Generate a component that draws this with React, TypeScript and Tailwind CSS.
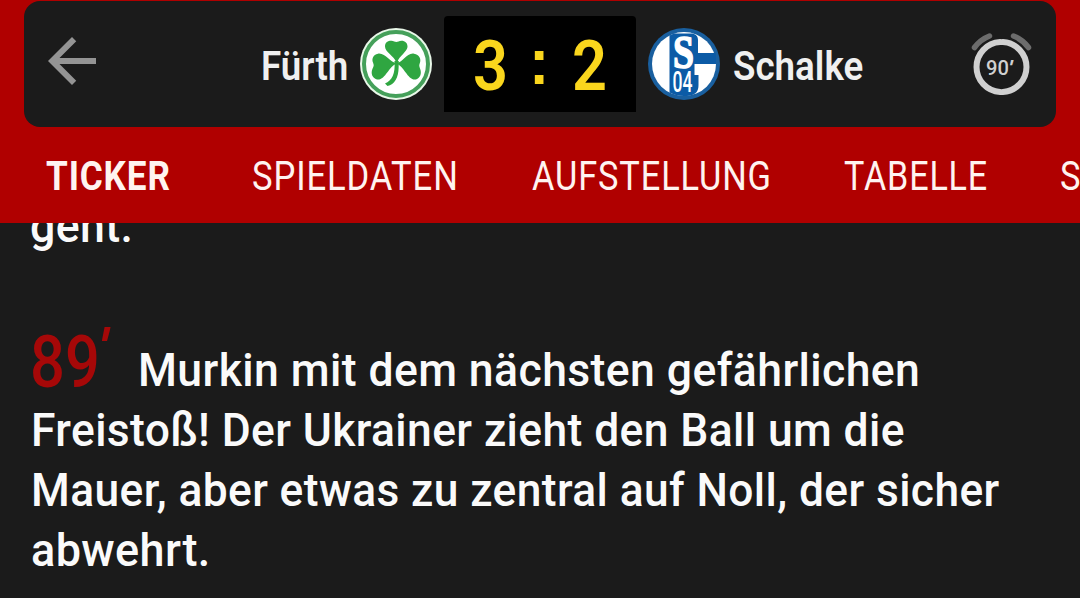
import { useLayoutEffect, useRef, useState } from "react";
import clsx from "clsx";

interface FitTextProps {
  children: string;
  className?: string;
  textClassName?: string;
}

// squeezes one line of text into the width of its box
function FitText({ children, className, textClassName }: FitTextProps) {
  const box = useRef<HTMLDivElement>(null);
  const text = useRef<HTMLSpanElement>(null);
  const [scale, setScale] = useState(1);

  useLayoutEffect(() => {
    if (!box.current || !text.current) return;
    setScale(box.current.clientWidth / text.current.offsetWidth);
  }, [children]);

  return (
    <div ref={box} className={clsx("shrink-0 whitespace-nowrap", className)}>
      <span
        ref={text}
        className={clsx("inline-block origin-left", textClassName)}
        style={{ transform: `scaleX(${scale})` }}
      >
        {children}
      </span>
    </div>
  );
}

function BackArrow() {
  return (
    <svg className="size-[72px]" viewBox="0 0 24 24" fill="#949494">
      <path d="M20 11H7.83l5.59-5.59L12 4l-8 8 8 8 1.41-1.41L7.83 13H20v-2z" />
    </svg>
  );
}

function FuerthLogo() {
  return (
    <svg className="size-[72px] shrink-0" viewBox="0 0 72 72">
      <circle cx="36" cy="36" r="36" fill="#e9f8e9" />
      <circle cx="36" cy="36" r="32" fill="#fff" stroke="#45a05a" strokeWidth="4" />
      <g fill="#2fa641">
        <path d="M36 34C34 28 25 24 25 18.500C25 14 28.500 12.500 31.500 12.700C33.500 12.800 35 14 36.300 14C37.800 14 39 12.700 41.500 12.700C45 12.700 47.800 15 47.500 19C47 24 39 28 37.500 34Z" />
        <path d="M36 35C31 35 25 24.500 18 25.700C13 26.600 11.500 31 13 34.500C14 37 14 38 12.600 40.500C10.500 45 12 50 17 51.500C25 53 29 38 36 36Z" />
        <path d="M37 35C42 35 47 24.500 54 25.700C59.500 26.600 61.200 31 60 34.500C59 37 59 38 60 40.500C62 45 60.500 50 56 51.500C48 53 44 38 37 36Z" />
        <path d="M34.500 33L38.800 33L38.600 40C38.500 49 34.500 57 27.500 58L25 55.500C32 52.500 35.500 46 34.500 33Z" />
      </g>
    </svg>
  );
}

function SchalkeLogo() {
  return (
    <svg className="size-[72px] shrink-0" viewBox="0 0 72 72">
      <circle cx="36" cy="36" r="36" fill="#195f9f" />
      <circle cx="36" cy="36" r="32" fill="#fff" />
      <path
        d="M21.500 7.500L26 5.500H44C47.500 6 50 8 50 12V25H68V36H46.500V47H50.500V57C50.500 63 48 66.500 42 67.500A32 32 0 0 1 21.500 64.500Z"
        fill="#0c5ba6"
      />
      <text
        x="25"
        y="40"
        fill="#fff"
        stroke="#fff"
        strokeWidth="1.500"
        fontSize="46"
        fontWeight="700"
        textLength="21"
        lengthAdjust="spacingAndGlyphs"
        fontFamily="Liberation Serif, serif"
      >
        S
      </text>
      <text
        x="24.500"
        y="64"
        fill="#fff"
        fontSize="29"
        fontWeight="500"
        textLength="20"
        lengthAdjust="spacingAndGlyphs"
        fontFamily="Roboto, sans-serif"
      >
        04
      </text>
    </svg>
  );
}

function MatchClock() {
  return (
    <div className="relative size-[72px]">
      <svg className="size-[72px]" viewBox="0 0 72 72" fill="none">
        <path
          d="M8.500 17.500A34 34 0 0 1 23.500 6M62.500 17.500A34 34 0 0 0 47.500 6"
          stroke="#6c6c6c"
          strokeWidth="5.500"
          strokeLinecap="round"
        />
        <path
          d="M34.100 12.040A25 25 0 0 0 34.100 61.960M36.900 12.040A25 25 0 0 1 36.900 61.960"
          stroke="#d0d0d0"
          strokeWidth="6"
          strokeLinecap="round"
        />
      </svg>
      <div className="absolute left-[20px] top-[26px] flex text-[21px]/[24px] font-medium text-[#d0d0d0]">
        <FitText className="w-[23px]">90</FitText>
        <FitText className="-ml-[1px] w-[4px]" textClassName="italic">
          ′
        </FitText>
      </div>
    </div>
  );
}

function ScoreBar() {
  return (
    <div className="mx-6 mt-px flex h-[126px] rounded-2xl bg-[#1b1b1b]">
      <div className="ml-3 mt-6 w-[225px] shrink-0">
        <BackArrow />
      </div>
      <FitText className="mt-10 w-[87px] text-[41px]/[50px] font-semibold text-[#f0f0f0]">
        Fürth
      </FitText>
      <div className="ml-3 mt-[27px]">
        <FuerthLogo />
      </div>
      <div className="ml-3 mt-[15px] flex h-24 w-48 shrink-0 rounded-t bg-black pl-[29px] text-[70px]/[100px] font-semibold text-[#fad61d]">
        <FitText className="w-[35px]">3</FitText>
        <FitText className="-mt-[4px] ml-[21px] w-[20px] font-['Liberation_Sans',sans-serif] text-[64px]/[100px] font-bold">
          :
        </FitText>
        <FitText className="ml-[23px] w-[35px]">2</FitText>
      </div>
      <div className="ml-3 mt-[27px]">
        <SchalkeLogo />
      </div>
      <FitText className="ml-[13px] mt-10 w-[130px] text-[41px]/[50px] font-semibold text-[#f0f0f0]">
        Schalke
      </FitText>
      <div className="ml-auto mr-[18px] mt-[29px]">
        <MatchClock />
      </div>
    </div>
  );
}

function Tabs() {
  return (
    <nav className="flex h-24 overflow-hidden pl-[46px] pt-[25px] text-[41px]/[48px] text-[#fff3f0]">
      <FitText className="w-[125px]" textClassName="font-bold tracking-wide">
        TICKER
      </FitText>
      <FitText className="ml-[81px] w-[207px]" textClassName="tracking-wide">
        SPIELDATEN
      </FitText>
      <FitText className="ml-[73px] w-[240px]" textClassName="tracking-wide">
        AUFSTELLUNG
      </FitText>
      <FitText className="ml-[72px] w-[144px]" textClassName="tracking-wide">
        TABELLE
      </FitText>
      <FitText className="ml-[72px] w-[170px]" textClassName="tracking-wide">
        STATISTIK
      </FitText>
    </nav>
  );
}

export default function App() {
  return (
    <div className="flex h-[598px] w-[1080px] flex-col overflow-hidden bg-[#1b1b1b] font-['Roboto',sans-serif]">
      <header className="h-[223px] shrink-0 bg-[#b00000]">
        <ScoreBar />
        <Tabs />
      </header>
      <main className="min-h-0 flex-1 overflow-hidden pl-[30px] text-[46px]/[60px] font-medium text-[#fafafa]">
        <FitText className="-mt-[27px] w-[103px]" textClassName="tracking-[0.4px]">
          geht.
        </FitText>
        <article className="mt-[84px]">
          <div className="flex h-[60px]">
            <div className="flex text-[72px]/[60px] font-medium text-[#a60808]">
              <FitText className="-mt-[7px] w-[70px]">89</FitText>
              <FitText
                className="-mt-[20px] -ml-[3px] w-[11px] text-[56px]/[60px]"
                textClassName="italic"
              >
                ′
              </FitText>
            </div>
            <FitText className="ml-[30px] w-[782px]" textClassName="tracking-[0.4px]">
              Murkin mit dem nächsten gefährlichen
            </FitText>
          </div>
          <FitText className="ml-[1px] w-[874px]" textClassName="tracking-[0.4px]">
            Freistoß! Der Ukrainer zieht den Ball um die
          </FitText>
          <FitText className="ml-[1px] w-[969px]" textClassName="tracking-[0.4px]">
            Mauer, aber etwas zu zentral auf Noll, der sicher
          </FitText>
          <FitText className="ml-[1px] w-[180px]" textClassName="tracking-[0.4px]">
            abwehrt.
          </FitText>
        </article>
      </main>
    </div>
  );
}
